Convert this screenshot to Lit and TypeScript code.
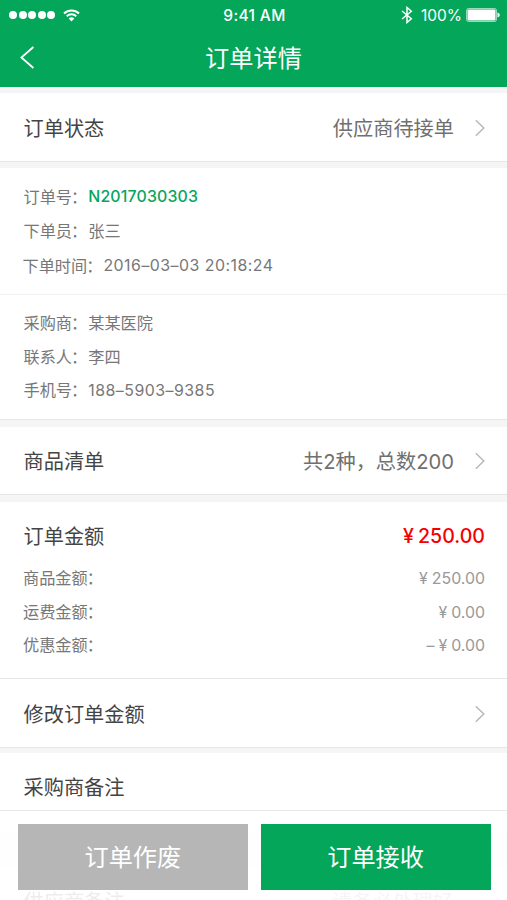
import { LitElement, html, css, svg } from "lit";
import { customElement } from "lit/decorators.js";

interface Field {
  label: string;
  value: string;
  kind: string;
}

const orderFields: Field[] = [
  { label: "订单号", value: "N2017030303", kind: "code" },
  { label: "下单员", value: "张三", kind: "cjk" },
  { label: "下单时间", value: "2016–03–03 20:18:24", kind: "num" },
];

const buyerFields: Field[] = [
  { label: "采购商", value: "某某医院", kind: "cjk" },
  { label: "联系人", value: "李四", kind: "cjk" },
  { label: "手机号", value: "188–5903–9385", kind: "num" },
];

const amounts = [
  { label: "商品金额", sign: "", value: "250.00" },
  { label: "运费金额", sign: "", value: "0.00" },
  { label: "优惠金额", sign: "–", value: "0.00" },
];

const chevron = html`<svg class="chevron" width="10" height="18" viewBox="0 0 10 18">
  ${svg`<path d="M0.8 1.2 L8.8 9 L0.8 16.8" fill="none" stroke="#b8b8b8" stroke-width="1.5"/>`}
</svg>`;

@customElement("app-root")
export class AppRoot extends LitElement {
  static styles = css`
    :host {
      display: block;
      position: relative;
      width: 507px;
      height: 900px;
      overflow: hidden;
      background: #f5f5f5;
      font-family: Inter, "Noto Sans CJK SC", sans-serif;
      font-weight: 400;
      color: #444;
      white-space: nowrap;
    }
    * { box-sizing: border-box; }
    svg { display: block; flex: none; }
    .top { height: 87px; background: #04a65a; color: #fff; margin-bottom: 6px; }
    .status {
      height: 30px;
      display: grid;
      grid-template-columns: 1fr auto 1fr;
      align-items: center;
      padding: 0 7px 0 9px;
    }
    .signal { display: flex; align-items: center; }
    .dots { display: flex; gap: 1.6px; margin-right: 8px; }
    .dot { width: 8px; height: 8px; border-radius: 50%; background: #fff; }
    .clock { font-size: 15.5px; font-weight: 500; letter-spacing: 0.35px; line-height: 29px; padding-top: 1px; }
    .power { display: flex; align-items: center; justify-content: flex-end; }
    .percent { font-size: 15.5px; line-height: 29px; margin: 0 4px 0 8px; padding-top: 1px; }
    .nav {
      height: 57px;
      display: grid;
      grid-template-columns: 60px 1fr 60px;
      align-items: center;
      padding-bottom: 3px;
    }
    .back { margin-left: 20px; }
    .title { text-align: center; font-size: 24.2px; line-height: 50px; padding-top: 4px; }
    .card { background: #fff; border-bottom: 1px solid #e6e6e6; margin-bottom: 7px; }
    .card.first { margin-bottom: 6px; }
    .card.last { margin-bottom: 5px; }
    .row {
      height: 67px;
      display: flex;
      align-items: center;
      padding: 0 22px 0 23.5px;
      font-size: 20.2px;
      line-height: 64px;
    }
    .row.tall { height: 68px; padding-top: 1px; }
    .row span { padding-top: 2px; }
    .row .side { margin-left: auto; margin-right: 21px; color: #707070; }
    .chevron { margin-left: auto; }
    .side + .chevron { margin-left: 0; }
    .group { height: 126px; padding: 12px 24px 0 23.5px; }
    .group + .group { height: 125px; border-top: 1px solid #f0f0f0; }
    .field {
      display: flex;
      height: 34px;
      line-height: 34px;
      font-size: 16.2px;
      color: #777;
    }
    .group + .group .field { height: 33.5px; line-height: 33.5px; }
    .field.long { margin-left: -1px; padding-top: 1px; }
    .colon { margin: 0 1px 0 -1px; }
    .num { font-size: 15.9px; letter-spacing: 0.48px; }
    .code { font-size: 15.9px; font-weight: 500; letter-spacing: 0.15px; color: #07a55c; }
    .sum { padding: 11px 22px 0 23px; height: 177px; border-bottom: 1px solid #e6e6e6; }
    .total {
      display: flex;
      justify-content: space-between;
      padding-left: 0.5px;
      font-size: 20.2px;
      line-height: 48px;
      height: 49px;
    }
    .price { color: #f50000; font-weight: 500; font-size: 19.6px; line-height: 46px; }
    .price .yen { margin-right: 4px; }
    .amount {
      display: flex;
      justify-content: space-between;
      font-size: 16.2px;
      line-height: 33.5px;
      height: 33.5px;
      color: #777;
    }
    .figure { color: #999; font-size: 15.9px; }
    .figure .yen { margin-right: 4px; }
    .figure .sign { margin-right: 4px; }
    .note { height: 80px; }
    .supply {
      padding: 0 54px 0 23.5px;
      display: flex;
      justify-content: space-between;
      font-size: 20.2px;
      line-height: 66px;
      background: #fff;
      margin-top: 36px;
    }
    .supply .side { color: #999; }
    .footer {
      position: absolute;
      left: 0;
      bottom: 0;
      width: 507px;
      height: 90px;
      border-top: 1px solid #e8e8e8;
      background: rgba(255, 255, 255, 0.9);
      display: flex;
      gap: 13px;
      padding: 12.5px 16.5px 10.5px 18px;
    }
    .button {
      flex: 1;
      border: 0;
      padding: 2px 0 0;
      color: #fff;
      font: 400 24.2px/64px Inter, "Noto Sans CJK SC", sans-serif;
      background: #b6b6b6;
    }
    .accept { background: #04a65a; }
  `;

  private field(f: Field) {
    return html`<div class="field ${f.label.length > 3 ? "long" : ""}">
      <span>${f.label}</span><span class="colon">：</span><span class=${f.kind}>${f.value}</span>
    </div>`;
  }

  render() {
    return html`
      <div class="top">
        <div class="status">
          <div class="signal">
            <div class="dots">${[1, 2, 3, 4, 5].map(() => html`<i class="dot"></i>`)}</div>
            <svg width="17" height="13" viewBox="0 0 17 13">
              <path d="M1 4.4 A11 11 0 0 1 16 4.4" fill="none" stroke="#fff" stroke-width="2" />
              <path d="M3.7 7.2 A7 7 0 0 1 13.3 7.2" fill="none" stroke="#fff" stroke-width="1.9" />
              <path d="M5.7 9.5 A4 4 0 0 1 11.3 9.5 L8.5 12.6 Z" fill="#fff" />
            </svg>
          </div>
          <div class="clock">9:41 AM</div>
          <div class="power">
            <svg width="12" height="18" viewBox="0 0 12 18">
              <path d="M1 5 L10.3 12.7 L6 16.5 V1.5 L10.3 5.3 L1 13" fill="none" stroke="#fff" stroke-width="1.5" />
            </svg>
            <span class="percent">100%</span>
            <svg width="34" height="14" viewBox="0 0 34 14">
              <rect x="0.5" y="0.5" width="30" height="13" rx="2" fill="none" stroke="#fff" stroke-opacity="0.6" />
              <rect x="1.5" y="1.5" width="28" height="11" rx="1" fill="#fff" />
              <path d="M31.5 4.5 Q33.8 5.2 33.8 7 Q33.8 8.8 31.5 9.5 Z" fill="#fff" />
            </svg>
          </div>
        </div>
        <div class="nav">
          <svg class="back" width="15" height="23" viewBox="0 0 15 23">
            <path d="M13.4 1 L1.4 11.5 L13.4 22" fill="none" stroke="#fff" stroke-width="1.8" />
          </svg>
          <div class="title">订单详情</div>
        </div>
      </div>

      <div class="card first">
        <div class="row tall"><span>订单状态</span><span class="side">供应商待接单</span>${chevron}</div>
      </div>

      <div class="card">
        <div class="group">${orderFields.map((f) => this.field(f))}</div>
        <div class="group">${buyerFields.map((f) => this.field(f))}</div>
      </div>

      <div class="card">
        <div class="row"><span>商品清单</span><span class="side">共2种，总数200</span>${chevron}</div>
      </div>

      <div class="card last">
        <div class="sum">
          <div class="total"><span>订单金额</span><span class="price"><span class="yen">¥</span>250.00</span></div>
          ${amounts.map(
            (a) => html`<div class="amount">
              <span>${a.label}<span class="colon">：</span></span>
              <span class="figure">${a.sign ? html`<span class="sign">${a.sign}</span>` : ""}<span class="yen">¥</span>${a.value}</span>
            </div>`
          )}
        </div>
        <div class="row tall"><span>修改订单金额</span>${chevron}</div>
      </div>

      <div class="note card"><div class="row"><span>采购商备注</span></div></div>
      <div class="supply"><span>供应商备注</span><span class="side">请务必处理好</span></div>

      <div class="footer">
        <button class="button">订单作废</button>
        <button class="button accept">订单接收</button>
      </div>
    `;
  }
}
